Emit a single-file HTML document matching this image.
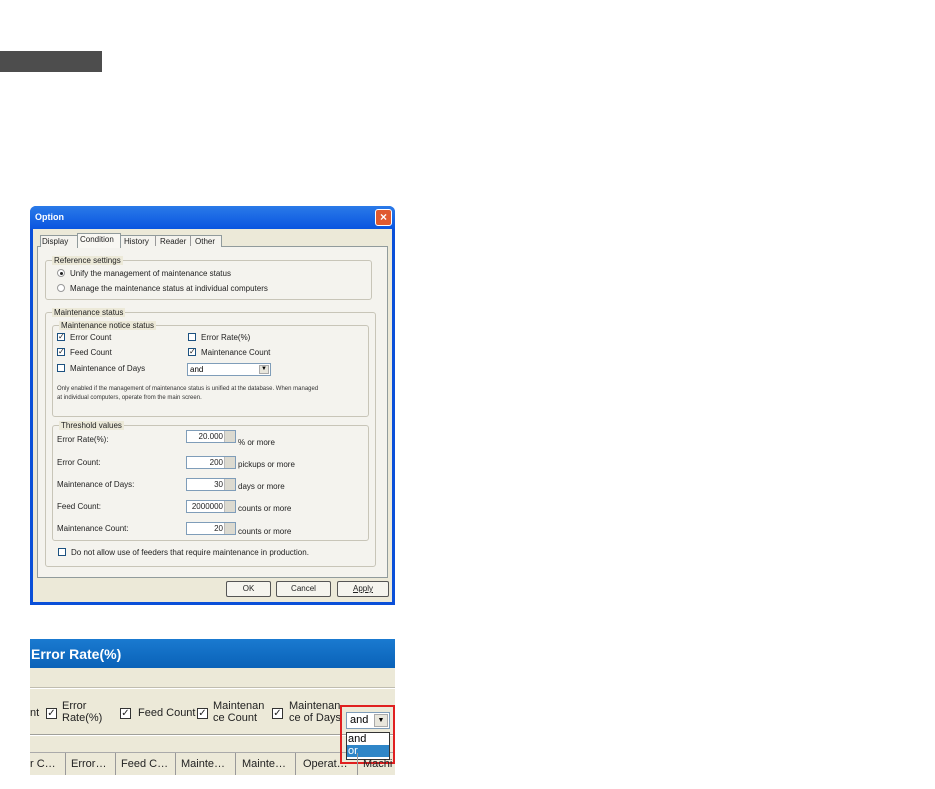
<!DOCTYPE html>
<html><head><style>
*{margin:0;padding:0;box-sizing:border-box}
body{width:935px;height:789px;background:#fff;position:relative;overflow:hidden;font-family:"Liberation Sans",sans-serif}
.a{position:absolute}
.t{position:absolute;font-size:8px;color:#222;white-space:nowrap;line-height:9px}
.g{position:absolute;border:1px solid #c8c5b8;border-radius:3px}
.gl{position:absolute;background:#ece9d8;font-size:8px;color:#222;padding:0 2px;line-height:9px;top:-5px;left:6px;white-space:nowrap}
.cb{position:absolute;width:8px;height:8px;border:1px solid #1c5180;background:#fff;font-size:8px;line-height:6px;text-align:center;color:#222}
.sp{position:absolute;width:50px;height:13px;border:1px solid #7f9db9;background:#fff;font-size:8px;line-height:11px;text-align:right;padding-right:12px;color:#222}
.sp:after{content:"";position:absolute;right:0;top:0;width:10px;height:11px;background:#dcdad0;border-left:1px solid #bbb}
.btn{position:absolute;height:16px;border:1px solid #555;border-radius:2px;background:#f5f4ee;font-size:8px;line-height:14px;text-align:center;color:#222}
</style></head><body>
<div class="a" style="left:0;top:51px;width:102px;height:21px;background:#4d4d4d"></div>

<!-- dialog -->
<div class="a" style="left:30px;top:206px;width:365px;height:399px;background:#0a4fd8;border-radius:6px 6px 0 0"></div>
<div class="a" style="left:30px;top:206px;width:365px;height:23px;background:linear-gradient(#2a7ae8,#0a55e0);border-radius:6px 6px 0 0"></div>
<div class="t" style="left:35px;top:213px;color:#fff;font-weight:bold;font-size:9px">Option</div>
<div class="a" style="left:375px;top:209px;width:17px;height:17px;background:#e05a30;border:1px solid #fff;border-radius:3px;color:#fff;font-size:12px;line-height:14px;text-align:center;font-weight:bold">×</div>
<div class="a" style="left:33px;top:229px;width:359px;height:373px;background:#ece9d8"></div>
<!-- tabs panel -->
<div class="a" style="left:37px;top:246px;width:351px;height:332px;border:1px solid #919b9c;background:#f4f3ee"></div>
<div class="a" style="left:40px;top:235px;width:182px;height:12px;border:1px solid #919b9c;border-bottom:none;background:#f4f3ee"></div>
<div class="a" style="left:77px;top:233px;width:44px;height:15px;border:1px solid #919b9c;border-bottom:none;background:#f8f7f2"></div>
<div class="t" style="left:42px;top:237px">Display</div>
<div class="t" style="left:80px;top:235px">Condition</div>
<div class="t" style="left:124px;top:237px">History</div>
<div class="t" style="left:160px;top:237px">Reader</div>
<div class="t" style="left:195px;top:237px">Other</div>
<div class="a" style="left:155px;top:236px;width:1px;height:10px;background:#999"></div>
<div class="a" style="left:190px;top:236px;width:1px;height:10px;background:#999"></div>

<div class="g" style="left:45px;top:260px;width:327px;height:40px"><span class="gl">Reference settings</span></div>
<div class="a" style="left:57px;top:269px;width:8px;height:8px;border:1px solid #999;border-radius:50%;background:#fff"><div style="margin:1.5px;width:3px;height:3px;background:#222;border-radius:50%"></div></div>
<div class="t" style="left:70px;top:269px">Unify the management of maintenance status</div>
<div class="a" style="left:57px;top:284px;width:8px;height:8px;border:1px solid #999;border-radius:50%;background:#fff"></div>
<div class="t" style="left:70px;top:284px">Manage the maintenance status at individual computers</div>

<div class="g" style="left:45px;top:312px;width:331px;height:255px"><span class="gl">Maintenance status</span></div>
<div class="g" style="left:52px;top:325px;width:317px;height:92px"><span class="gl">Maintenance notice status</span></div>
<div class="cb" style="left:57px;top:333px">✓</div><div class="t" style="left:70px;top:333px">Error Count</div>
<div class="cb" style="left:188px;top:333px"></div><div class="t" style="left:201px;top:333px">Error Rate(%)</div>
<div class="cb" style="left:57px;top:348px">✓</div><div class="t" style="left:70px;top:348px">Feed Count</div>
<div class="cb" style="left:188px;top:348px">✓</div><div class="t" style="left:201px;top:348px">Maintenance Count</div>
<div class="cb" style="left:57px;top:364px"></div><div class="t" style="left:70px;top:364px">Maintenance of Days</div>
<div class="a" style="left:187px;top:363px;width:84px;height:13px;border:1px solid #7f9db9;background:#fff;font-size:8px;line-height:11px;padding-left:2px">and<div style="position:absolute;right:1px;top:1px;width:10px;height:9px;background:#e8e6dc;border:1px solid #aaa;font-size:6px;line-height:7px;text-align:center">▼</div></div>
<div class="t" style="left:57px;top:385px;font-size:6px;line-height:9px;color:#333">Only enabled if the management of maintenance status is unified at the database. When managed<br>at individual computers, operate from the main screen.</div>

<div class="g" style="left:52px;top:425px;width:317px;height:116px"><span class="gl">Threshold values</span></div>
<div class="t" style="left:57px;top:435px">Error Rate(%):</div><div class="sp" style="left:186px;top:430px">20.000</div><div class="t" style="left:238px;top:438px">% or more</div>
<div class="t" style="left:57px;top:458px">Error Count:</div><div class="sp" style="left:186px;top:456px">200</div><div class="t" style="left:238px;top:460px">pickups or more</div>
<div class="t" style="left:57px;top:480px">Maintenance of Days:</div><div class="sp" style="left:186px;top:478px">30</div><div class="t" style="left:238px;top:482px">days or more</div>
<div class="t" style="left:57px;top:502px">Feed Count:</div><div class="sp" style="left:186px;top:500px">2000000</div><div class="t" style="left:238px;top:504px">counts or more</div>
<div class="t" style="left:57px;top:524px">Maintenance Count:</div><div class="sp" style="left:186px;top:522px">20</div><div class="t" style="left:238px;top:527px">counts or more</div>
<div class="cb" style="left:58px;top:548px"></div><div class="t" style="left:71px;top:548px">Do not allow use of feeders that require maintenance in production.</div>

<div class="btn" style="left:226px;top:581px;width:45px">OK</div>
<div class="btn" style="left:276px;top:581px;width:55px">Cancel</div>
<div class="btn" style="left:337px;top:581px;width:52px;text-decoration:underline">Apply</div>

<!-- bottom panel -->
<div class="a" style="left:30px;top:639px;width:365px;height:136px;background:#ece9d8"></div>
<div class="a" style="left:30px;top:639px;width:365px;height:29px;background:linear-gradient(#1a7ad0,#0a62b8)"></div>
<div class="t" style="left:31px;top:646px;color:#fff;font-size:14px;line-height:16px;font-weight:bold">Error Rate(%)</div>
<div class="a" style="left:30px;top:687px;width:365px;height:2px;background:#fff;border-top:1px solid #c0bdb0"></div>
<div class="a" style="left:30px;top:734px;width:365px;height:2px;background:#fff;border-top:1px solid #a0a09a"></div>
<div class="a" style="left:30px;top:752px;width:365px;height:1px;background:#aaa"></div>
<div class="t" style="left:30px;top:707px;font-size:11px;line-height:12px">nt</div>
<div class="cb" style="left:46px;top:708px;width:11px;height:11px;font-size:10px;line-height:9px;border-color:#333">✓</div>
<div class="t" style="left:62px;top:700px;font-size:11px;line-height:12px">Error<br>Rate(%)</div>
<div class="cb" style="left:120px;top:708px;width:11px;height:11px;font-size:10px;line-height:9px;border-color:#333">✓</div>
<div class="t" style="left:138px;top:707px;font-size:11px;line-height:12px">Feed Count</div>
<div class="cb" style="left:197px;top:708px;width:11px;height:11px;font-size:10px;line-height:9px;border-color:#333">✓</div>
<div class="t" style="left:213px;top:700px;font-size:11px;line-height:12px">Maintenan<br>ce Count</div>
<div class="cb" style="left:272px;top:708px;width:11px;height:11px;font-size:10px;line-height:9px;border-color:#333">✓</div>
<div class="t" style="left:289px;top:700px;font-size:11px;line-height:12px">Maintenan<br>ce of Days</div>
<div class="a" style="left:346px;top:712px;width:44px;height:17px;border:1px solid #7f9db9;background:#fff;font-size:11px;line-height:15px;padding-left:3px">and<div style="position:absolute;right:1px;top:1px;width:14px;height:13px;background:#e8e6dc;border:1px solid #aaa;font-size:7px;line-height:11px;text-align:center">▼</div></div>
<div class="a" style="left:346px;top:732px;width:44px;height:28px;border:1px solid #333;background:#fff;font-size:11px;line-height:12px">
<div style="padding-left:1px">and</div><div style="background:#2f86c8;color:#fff;padding-left:1px">or</div></div>
<div class="a" style="left:340px;top:705px;width:55px;height:59px;border:2px solid #e02020"></div>
<div class="a" style="left:30px;top:753px;width:365px;height:22px;font-size:11px;line-height:22px;color:#222;white-space:nowrap;overflow:hidden">
<span class="a" style="left:0;width:36px;border-right:1px solid #999;height:22px">r C…</span>
<span class="a" style="left:36px;width:50px;border-right:1px solid #999;height:22px;padding-left:5px">Error…</span>
<span class="a" style="left:86px;width:60px;border-right:1px solid #999;height:22px;padding-left:5px">Feed C…</span>
<span class="a" style="left:146px;width:60px;border-right:1px solid #999;height:22px;padding-left:5px">Mainte…</span>
<span class="a" style="left:206px;width:60px;border-right:1px solid #999;height:22px;padding-left:6px">Mainte…</span>
<span class="a" style="left:266px;width:62px;border-right:1px solid #999;height:22px;padding-left:7px">Operat…</span>
<span class="a" style="left:333px;height:22px">Machi</span>
</div>
</body></html>
